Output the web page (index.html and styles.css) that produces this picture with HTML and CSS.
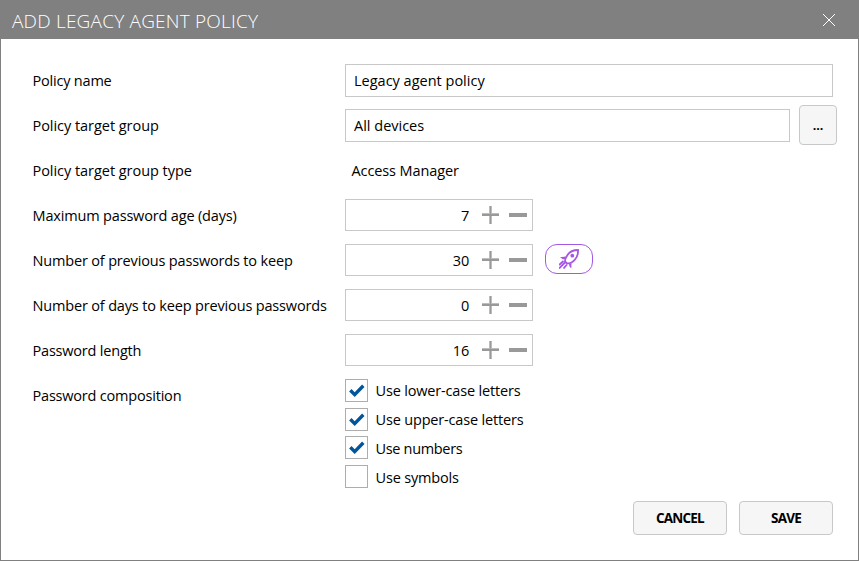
FILE: index.html
```html
<!DOCTYPE html>
<html lang="en">
<head>
<meta charset="utf-8">
<title>Add legacy agent policy</title>
<link rel="stylesheet" href="styles.css">
</head>
<body>
<svg class="defs" aria-hidden="true">
  <symbol id="plus" viewBox="0 0 17 18"><path d="M0 7H17V8H0ZM7 0H8V18H7ZM9 0H10V18H9Z" fill="#bdbdbd"/><path d="M0 8H17V10H0ZM8 0H9V18H8Z" fill="#999"/></symbol>
  <symbol id="minus" viewBox="0 0 18 18"><path d="M0 7H18V11H0Z" fill="#999"/></symbol>
  <symbol id="check" viewBox="0 0 21 21"><path d="M4.300 10.200L8.700 14.600L17.300 5.800" fill="none" stroke="#00559b" stroke-width="3.400"/></symbol>
</svg>
<main class="dialog">
  <header class="titlebar">
    <h1 class="title">ADD LEGACY AGENT POLICY</h1>
    <svg class="close" viewBox="0 0 12 12"><path d="M0 0L12 12M12 0L0 12" stroke="#fff" stroke-width="1"/></svg>
  </header>
  <form class="form">
    <div class="row"><span class="label">Policy name</span><div class="field wide"><span>Legacy agent policy</span></div></div>
    <div class="row"><span class="label loose">Policy target group</span><div class="field group"><span>All devices</span></div><button type="button" class="btn browse">...</button></div>
    <div class="row"><span class="label loose">Policy target group type</span><span class="plain">Access Manager</span></div>
    <div class="row"><span class="label snug">Maximum password age (days)</span><div class="spin"><span class="num">7</span><svg class="plus"><use href="#plus"/></svg><svg class="minus"><use href="#minus"/></svg></div></div>
    <div class="row"><span class="label snug">Number of previous passwords to keep</span><div class="spin"><span class="num">30</span><svg class="plus"><use href="#plus"/></svg><svg class="minus"><use href="#minus"/></svg></div>
      <span class="pill"><svg class="rocket" viewBox="0 0 20 20" fill="none" stroke="#a557e6" stroke-width="1.800"><path d="M19 1C14 1 10.500 3 8.500 6C6.500 9 5.800 11 6 12.500L8 14.500C11 14.500 14 13 16 10.500C18.500 7.500 19.300 5 19 1Z"/><circle cx="13.300" cy="6.700" r="1.900" fill="#a557e6" stroke="none"/><path d="M7 7.500L1 8.300L3.500 10L5.500 10.500ZM12.500 14L12.300 19.500L10.500 17.500L10 15Z" fill="#a557e6" stroke="none"/><path d="M4.500 12L0 16M6 13.500L0 19.500M8 15.500L4.500 19.500"/></svg></span></div>
    <div class="row"><span class="label snug">Number of days to keep previous passwords</span><div class="spin"><span class="num">0</span><svg class="plus"><use href="#plus"/></svg><svg class="minus"><use href="#minus"/></svg></div></div>
    <div class="row"><span class="label">Password length</span><div class="spin"><span class="num">16</span><svg class="plus"><use href="#plus"/></svg><svg class="minus"><use href="#minus"/></svg></div></div>
    <div class="row options"><span class="label">Password composition</span>
      <div class="checks">
        <label class="check"><span class="box"><svg><use href="#check"/></svg></span><span class="even">Use lower-case letters</span></label>
        <label class="check"><span class="box"><svg><use href="#check"/></svg></span><span class="even">Use upper-case letters</span></label>
        <label class="check"><span class="box"><svg><use href="#check"/></svg></span><span class="tight">Use numbers</span></label>
        <label class="check"><span class="box"></span><span class="even low">Use symbols</span></label>
      </div>
    </div>
  </form>
  <footer class="actions"><button type="button" class="btn action">CANCEL</button><button type="button" class="btn action">SAVE</button></footer>
</main>
</body>
</html>
```
FILE: styles.css
```css
* { box-sizing: border-box; }
body { margin: 0; font: 14.5px/20px "Open Sans", "Noto Sans", sans-serif; color: #000; letter-spacing: -0.2px; }
.defs { position: absolute; width: 0; height: 0; }
.dialog { width: 859px; height: 561px; border: 1px solid #808080; background: #fff; display: flex; flex-direction: column; }
.titlebar { height: 38px; flex: none; background: #808080; display: flex; align-items: center; justify-content: space-between; padding: 0 23px 0 11px; }
.title { margin: 2px 0 0; font-size: 19px; font-weight: 300; line-height: 24px; color: #fff; letter-spacing: 0.2px; }
.close { width: 12px; height: 12px; overflow: visible; }
.form { padding: 19px 0 0 31.5px; }
.row { height: 45px; display: flex; align-items: center; white-space: nowrap; }
.label { width: 312.5px; flex: none; }
.loose { letter-spacing: -0.04px; }
.snug { letter-spacing: -0.165px; }
.even { letter-spacing: -0.17px; }
.tight { letter-spacing: -0.33px; }
.field { height: 33px; border: 1px solid #c8c8c8; display: flex; align-items: center; padding-left: 8px; letter-spacing: 0; }
.wide { width: 488px; }
.group { width: 445px; }
.plain { padding-left: 6.5px; letter-spacing: -0.1px; }
.btn { font-family: inherit; font-weight: 700; color: #000; background: #f6f6f6; border: 1px solid #c8c8c8; border-radius: 4px; padding: 0; }
.browse { width: 38px; height: 40px; margin: 0 0 1px 9px; font-size: 12.5px; }
.spin { width: 188px; height: 32px; margin-bottom: 2px; border: 1px solid #c8c8c8; display: flex; align-items: center; }
.num { width: 123px; padding-top: 2px; text-align: right; }
.plus { width: 17px; height: 18px; margin-left: 13px; }
.minus { width: 18px; height: 18px; margin-left: 10px; }
.pill { width: 48px; height: 30px; margin: 0 0 3px 12px; border: 1px solid #a557e6; border-radius: 12px; display: flex; align-items: center; justify-content: center; }
.rocket { width: 20px; height: 20px; }
.options { align-items: flex-start; height: 128px; }
.options .label { line-height: 45px; }
.checks { padding-top: 3px; }
.check { display: flex; align-items: center; height: 28.8px; gap: 7.5px; }
.check > span:last-child { padding-top: 1px; }
.check > .tight:last-child, .check > .low:last-child { padding-top: 2px; }
.box { width: 23px; height: 23px; border: 1px solid #adadad; }
.box svg { width: 21px; height: 21px; display: block; }
.actions { display: flex; justify-content: flex-end; gap: 12px; padding-right: 25px; }
.action { width: 94px; height: 34px; font-size: 13.5px; letter-spacing: -0.8px; }
```
